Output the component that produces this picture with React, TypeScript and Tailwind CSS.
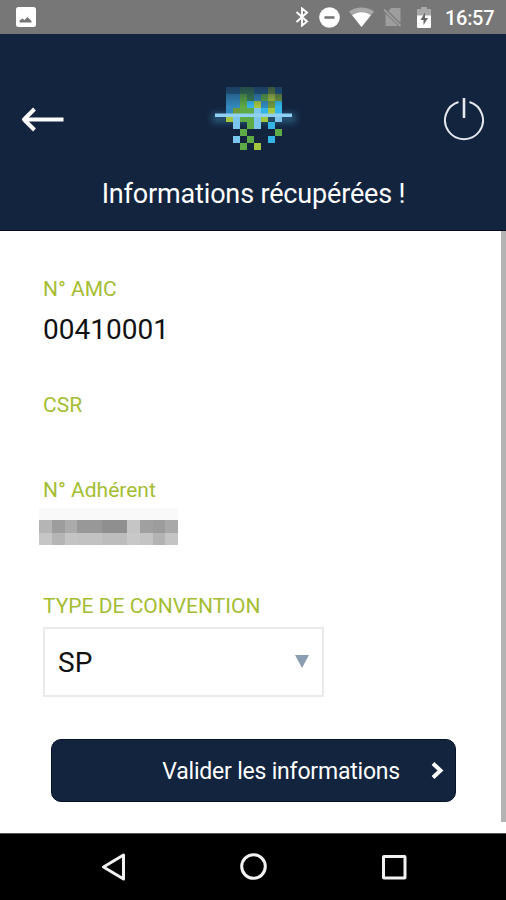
import type { ReactNode } from "react";

const PALETTE: Record<string, string> = {
  d: "#23638f",
  m: "#3389bd",
  l: "#7cc6ee",
  c: "#35b5e6",
  g: "#5eaa46",
  k: "#3b8355",
  y: "#a4c63f",
  o: "#6f9a3c",
};

// One character per 7px cell, "." is left empty
const LOGO_ROWS = [
  "ddkkddod",
  "mmgkmgyo",
  "mmgcymoc",
  "mogglcyc",
  "ylggly.l",
  ".l.gl.c.",
  "..g....g",
  ".l.g..c.",
  "..g.y...",
];

function StatusBar() {
  return (
    <div className="flex h-[34px] items-center justify-between bg-[#777777] pl-4 pr-[11px] text-white">
      <svg width="20" height="20" viewBox="0 0 20 20">
        <rect width="20" height="20" rx="2.5" fill="#fff" />
        <path d="M3.5 15.5v-2l3-2 2 1.500 3-3 2 2 2 2v1.500z" fill="#777" />
      </svg>
      <div className="flex items-center">
        <svg width="14" height="20" viewBox="0 0 14 20" fill="none" stroke="#fff" strokeWidth="2">
          <path d="M1.500 5l10.500 9.500L7 18.500v-17l5 4L1.500 15" />
        </svg>
        <svg className="ml-[10px]" width="21" height="21" viewBox="0 0 21 21">
          <circle cx="10.500" cy="10.500" r="10.300" fill="#fff" />
          <path d="M5.500 9.200h10v2.600h-10z" fill="#777" />
        </svg>
        <svg className="ml-[9px]" width="25" height="20" viewBox="0 0 25 20">
          <path d="M0 4.500C7-1 18-1 25 4.500L12.500 20z" fill="#a8a8a8" />
          <path d="M3.200 8.300c5.500-4 13-4 18.600 0L12.500 20z" fill="#fff" />
        </svg>
        <svg className="ml-[9px]" width="19" height="20" viewBox="0 0 19 20">
          <path d="M8 1h9.500v15L5.500 4zM2.500 6.500L15 19H2.500z" fill="#9e9e9e" />
          <path d="M1 2.500L17.500 19" stroke="#9e9e9e" strokeWidth="1.800" />
        </svg>
        <svg className="ml-[15px]" width="14" height="21" viewBox="0 0 14 21">
          <path d="M4 0h6v2h4v8H0V2h4z" fill="#a8a8a8" />
          <path d="M0 8.500h14V20a1 1 0 0 1-1 1H1a1 1 0 0 1-1-1z" fill="#fff" />
          <path d="M8 5.500L3.500 13H6.500v5L11 11H8z" fill="#666" />
        </svg>
        <span className="ml-[14px] w-[50px] whitespace-nowrap pt-px text-[20px] font-medium leading-none tracking-[-0.3px]">16:57</span>
      </div>
    </div>
  );
}

function Logo() {
  return (
    <svg width="92" height="70" viewBox="0 0 92 70" className="overflow-visible">
      <defs>
        <linearGradient id="fade" x1="0" y1="0" x2="0" y2="1">
          <stop offset="0" stopColor="#13243f" stopOpacity="0.6" />
          <stop offset="1" stopColor="#13243f" stopOpacity="0" />
        </linearGradient>
        <filter id="glow" x="-20%" y="-80%" width="140%" height="260%">
          <feGaussianBlur stdDeviation="3" />
        </filter>
      </defs>
      <rect x="4" y="25" width="84" height="10" fill="#3f8fb5" opacity="0.45" filter="url(#glow)" />
      {LOGO_ROWS.map((row, y) =>
        row.split("").map((cell, x) =>
          cell === "." ? null : (
            <rect key={`${x}-${y}`} x={18 + x * 7} y={y * 7 - 1} width="7" height="7" fill={PALETTE[cell]} shapeRendering="crispEdges" />
          )
        )
      )}
      <rect x="18" y="-1" width="56" height="20" fill="url(#fade)" />
      <rect x="7" y="25.500" width="77" height="3.500" fill="#8fd0f3" />
    </svg>
  );
}

function Header() {
  return (
    <header className="h-[197px] border-b border-[#050b18] bg-[#13243f] pt-[54px] text-white">
      <div className="flex h-[64px] items-start justify-between pl-[21px] pr-[21px]">
        <svg className="mt-[19px]" width="43" height="25" viewBox="0 0 43 25" fill="none" stroke="#fff">
          <path d="M42.500 12.500H3" strokeWidth="4" />
          <path d="M13.500 2L3 12.500l10.500 10.500" strokeWidth="4" strokeLinejoin="round" />
        </svg>
        <Logo />
        <svg className="mt-[9px]" width="42" height="44" viewBox="0 0 42 44" fill="none" stroke="#e3e8ee" strokeWidth="2">
          <path d="M15.500 5A19 19 0 1 0 26.500 5" />
          <path d="M21 1v20" strokeWidth="2.600" />
        </svg>
      </div>
      <h1 className="mt-[25px] ml-[1px] text-center text-[27px] leading-[34px] tracking-[-0.16px]">Informations récupérées !</h1>
    </header>
  );
}

function Label({ children }: { children: ReactNode }) {
  return <div className="h-6 whitespace-nowrap text-[21px] leading-6 text-[#a4bd33]">{children}</div>;
}

const MASK_COLUMNS = [
  { width: "w-[13px]", top: "bg-[#b5b5b5]", bottom: "bg-[#c6c6c6]" },
  { width: "w-[13px]", top: "bg-[#9d9d9d]", bottom: "bg-[#b5b5b5]" },
  { width: "w-[12px]", top: "bg-[#ababab]", bottom: "bg-[#c4c4c4]" },
  { width: "w-[25px]", top: "bg-[#989898]", bottom: "bg-[#c2c2c2]" },
  { width: "w-[25px]", top: "bg-[#8f8f8f]", bottom: "bg-[#bdbdbd]" },
  { width: "w-[13px]", top: "bg-[#c5c5c5]", bottom: "bg-[#c8c8c8]" },
  { width: "w-[13px]", top: "bg-[#a0a0a0]", bottom: "bg-[#c4c4c4]" },
  { width: "w-[12px]", top: "bg-[#9c9c9c]", bottom: "bg-[#b3b3b3]" },
  { width: "w-[13px]", top: "bg-[#a8a8a8]", bottom: "bg-[#c4c4c4]" },
];

function MaskedValue() {
  return (
    <div className="-ml-1 mt-[6px] flex h-[38px]">
      {MASK_COLUMNS.map((column, i) => (
        <div key={i} className={column.width}>
          <div className="h-[12px] bg-[#f9f9fa]" />
          <div className={`h-[13px] ${column.top}`} />
          <div className={`h-[12px] ${column.bottom}`} />
        </div>
      ))}
    </div>
  );
}

function NavBar() {
  return (
    <nav className="flex h-[67px] items-center border-t border-[#555] bg-black pl-[101px]">
      <svg width="26" height="28" viewBox="0 0 26 28" fill="none" stroke="#f2f2f2" strokeWidth="3">
        <path d="M22.500 2v24L2.500 14z" strokeLinejoin="round" />
      </svg>
      <svg className="ml-[113px]" width="28" height="28" viewBox="0 0 28 28" fill="none" stroke="#f2f2f2" strokeWidth="3">
        <circle cx="13.500" cy="13.500" r="11.800" />
      </svg>
      <svg className="ml-[114px]" width="25" height="25" viewBox="0 0 25 25" fill="none" stroke="#f2f2f2" strokeWidth="3">
        <rect x="1.500" y="1.500" width="21.500" height="21.500" rx="0.5" />
      </svg>
    </nav>
  );
}

export default function App() {
  return (
    <div className="flex h-[900px] w-[506px] flex-col overflow-hidden bg-white font-[Roboto,sans-serif]">
      <StatusBar />
      <Header />
      <div className="flex flex-1 justify-between">
        <main className="pl-[43px] pt-[46px]">
          <Label>N° AMC</Label>
          <div className="mt-[12px] h-[34px] text-[28px] leading-[34px] text-[#111]">00410001</div>
          <div className="mt-[46px]">
            <Label>CSR</Label>
          </div>
          <div className="mt-[61px]">
            <Label>N° Adhérent</Label>
          </div>
          <MaskedValue />
          <div className="mt-[48px]">
            <Label>TYPE DE CONVENTION</Label>
          </div>
          <button className="mt-[9px] flex h-[70px] w-[281px] items-center justify-between border-2 border-[#e8eaec] pl-[13px] pr-[13px] text-[28px] text-[#111]">
            <span className="pt-[2px]">SP</span>
            <svg width="14" height="13" viewBox="0 0 14 13" className="mb-px">
              <path d="M0 0h14L7 13z" fill="#8b9db0" />
            </svg>
          </button>
          <button className="ml-[8px] mt-[42px] flex h-[63px] w-[405px] items-center justify-end rounded-[10px] border border-[#081226] bg-[#13243f] pr-[11px] text-[23px] text-white">
            <span className="whitespace-nowrap pt-[3px] tracking-[-0.2px]">Valider les informations</span>
            <svg className="ml-[31px]" width="13" height="18" viewBox="0 0 13 18" fill="none" stroke="#fff" strokeWidth="4">
              <path d="M2 1.500l7.500 7L2 15.500" />
            </svg>
          </button>
        </main>
        <div className="h-[591px] w-[5px] bg-[#b3b3b3]" />
      </div>
      <NavBar />
    </div>
  );
}
